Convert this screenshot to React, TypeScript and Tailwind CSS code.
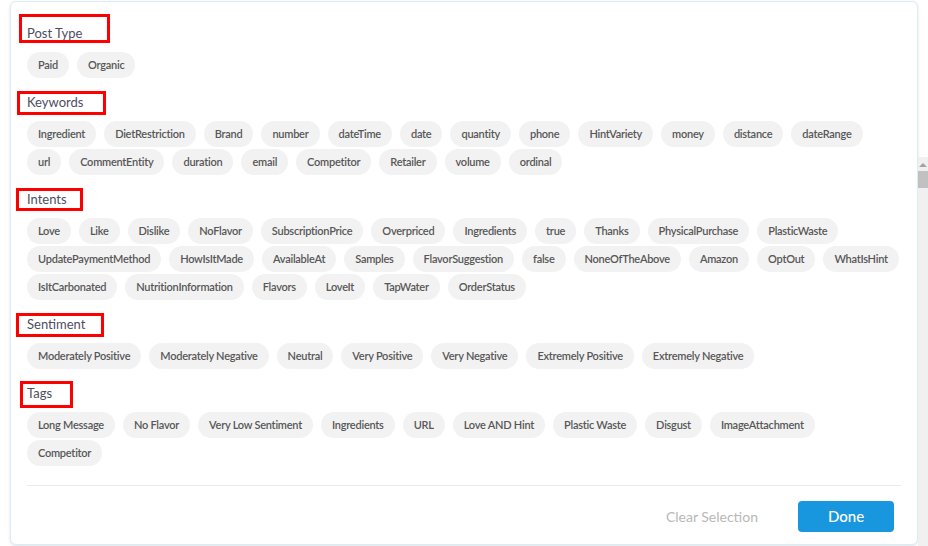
import React from "react";

type Section = {
  title: string;
  items: string[];
  breakAfter?: string[];
  box: { left: number; top: number; w: number; h: number };
};

const sections: Section[] = [
  { title: "Post Type", items: ["Paid", "Organic"], box: { left: -8, top: -9, w: 91, h: 29 } },
  {
    title: "Keywords",
    items: [
      "Ingredient", "DietRestriction", "Brand", "number", "dateTime", "date", "quantity", "phone",
      "HintVariety", "money", "distance", "dateRange", "url", "CommentEntity", "duration", "email",
      "Competitor", "Retailer", "volume", "ordinal",
    ],
    breakAfter: ["dateRange"],
    box: { left: -10, top: -1, w: 89, h: 24 },
  },
  {
    title: "Intents",
    items: [
      "Love", "Like", "Dislike", "NoFlavor", "SubscriptionPrice", "Overpriced", "Ingredients", "true",
      "Thanks", "PhysicalPurchase", "PlasticWaste", "UpdatePaymentMethod", "HowIsItMade", "AvailableAt",
      "Samples", "FlavorSuggestion", "false", "NoneOfTheAbove", "Amazon", "OptOut", "WhatIsHint",
      "IsItCarbonated", "NutritionInformation", "Flavors", "LoveIt", "TapWater", "OrderStatus",
    ],
    breakAfter: ["PlasticWaste", "WhatIsHint"],
    box: { left: -11, top: -1, w: 67, h: 23 },
  },
  {
    title: "Sentiment",
    items: [
      "Moderately Positive", "Moderately Negative", "Neutral", "Very Positive", "Very Negative",
      "Extremely Positive", "Extremely Negative",
    ],
    box: { left: -11, top: -1, w: 88, h: 24 },
  },
  {
    title: "Tags",
    items: [
      "Long Message", "No Flavor", "Very Low Sentiment", "Ingredients", "URL", "Love AND Hint",
      "Plastic Waste", "Disgust", "ImageAttachment", "Competitor",
    ],
    breakAfter: ["ImageAttachment"],
    box: { left: -7, top: -2, w: 53, h: 27 },
  },
];

function Chip({ label }: { label: string }) {
  return (
    <span className="my-px flex h-[26px] items-center rounded-full bg-[#f2f2f2] px-[11px] text-[11px] font-semibold tracking-[-0.25px] text-[#575757]">
      {label}
    </span>
  );
}

export default function App() {
  return (
    <div className="relative h-[546px] w-[928px] overflow-hidden bg-white font-['Lato',sans-serif]">
      {/* scrollbar strip */}
      <div className="absolute right-0 top-[157px] flex h-[389px] w-[10px] flex-col items-center bg-[#f0f0f0]">
        <span className="mt-[6px] h-0 w-0 border-x-[4px] border-b-[4px] border-x-transparent border-b-[#a3a3a3]" />
        <span className="mt-[4px] h-[17px] w-full bg-[#c1c1c1]" />
      </div>

      <div className="ml-[10px] mt-px flex h-[544px] w-[908px] flex-col rounded-[6px] border border-[#d9edf9] bg-white px-4 pt-[21px] shadow-[0_1px_3px_rgba(0,0,0,0.12)]">
        {sections.map((s) => (
          <div key={s.title} className="mb-[13px]">
            <div className="relative mb-[8px] h-5 text-[13px] leading-5 text-[#4d4d5e]">
              {s.title}
              <span
                className="absolute border-[3px] border-[#ff0000]"
                style={{ left: s.box.left, top: s.box.top, width: s.box.w, height: s.box.h }}
              />
            </div>
            <div className="flex flex-wrap gap-x-2">
              {s.items.map((it, i) => (
                <React.Fragment key={i}>
                  <Chip label={it} />
                  {s.breakAfter?.includes(it) && <span className="h-0 basis-full" />}
                </React.Fragment>
              ))}
            </div>
          </div>
        ))}

        <div className="mt-[5px] border-t border-[#ebebeb]" />
        <div className="flex items-center justify-end gap-10 pr-[7px] pt-[15px]">
          <span className="text-[14px] text-[#b8b8b8]">Clear Selection</span>
          <button className="h-[31px] w-[96px] rounded-[4px] bg-[#1897de] text-[15px] font-medium text-white">
            Done
          </button>
        </div>
      </div>
    </div>
  );
}
